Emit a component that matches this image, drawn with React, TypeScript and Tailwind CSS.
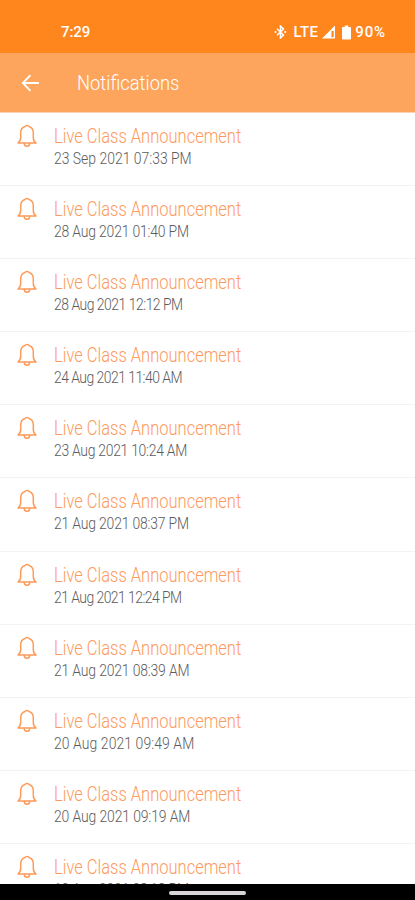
type Notification = {
  title: string;
  date: string;
  tracking: string;
};

const notifications: Notification[] = [
  { title: "Live Class Announcement", date: "23 Sep 2021 07:33 PM", tracking: "tracking-[0px]" },
  { title: "Live Class Announcement", date: "28 Aug 2021 01:40 PM", tracking: "tracking-[-0.22px]" },
  { title: "Live Class Announcement", date: "28 Aug 2021 12:12 PM", tracking: "tracking-[-0.6px]" },
  { title: "Live Class Announcement", date: "24 Aug 2021 11:40 AM", tracking: "tracking-[-0.65px]" },
  { title: "Live Class Announcement", date: "23 Aug 2021 10:24 AM", tracking: "tracking-[-0.35px]" },
  { title: "Live Class Announcement", date: "21 Aug 2021 08:37 PM", tracking: "tracking-[-0.22px]" },
  { title: "Live Class Announcement", date: "21 Aug 2021 12:24 PM", tracking: "tracking-[-0.67px]" },
  { title: "Live Class Announcement", date: "21 Aug 2021 08:39 AM", tracking: "tracking-[-0.2px]" },
  { title: "Live Class Announcement", date: "20 Aug 2021 09:49 AM", tracking: "tracking-[0.1px]" },
  { title: "Live Class Announcement", date: "20 Aug 2021 09:19 AM", tracking: "tracking-[-0.15px]" },
  { title: "Live Class Announcement", date: "19 Aug 2021 08:18 PM", tracking: "tracking-[-0.22px]" },
];

const BellIcon = () => (
  <svg width="20" height="24" viewBox="0 0 20 24" fill="none" stroke="#fd9b58" strokeWidth="1.5" strokeLinecap="round" strokeLinejoin="round">
    <path d="M8 2.5C8.2 1.1 11.8 1.1 12 2.5C15 3.4 16.3 5.6 16.3 8.8V13.5C16.3 15.8 17 17.6 19 19H1C3 17.6 3.7 15.8 3.7 13.5V8.8C3.7 5.6 5 3.4 8 2.5Z" />
    <path d="M7.2 19.2C7.4 23.4 12.6 23.4 12.8 19.2" />
  </svg>
);

const StatusBar = () => (
  <div className="h-[53px] shrink-0 bg-[#ff851d] text-white flex items-start pt-[22px] pl-[61px] pr-[29px]">
    <span className="text-[15px] leading-[20px] font-medium tracking-[-0.1px]">7:29</span>
    <div className="ml-auto flex items-center h-5">
      <svg width="13" height="14" viewBox="0 0 13 14" fill="none" stroke="white" strokeWidth="1.5">
        <path d="M3 3.8L9.5 10L6.5 12.8V1.2L9.5 4L3 10.2" />
        <circle cx="1.5" cy="7" r="1.1" fill="white" stroke="none" />
        <circle cx="11.2" cy="7" r="1.1" fill="white" stroke="none" />
      </svg>
      <span className="ml-[6px] text-[15px] leading-[20px] font-medium tracking-[0.3px]">LTE</span>
      <svg className="ml-[4px]" width="14" height="14" viewBox="0 0 14 14">
        <path d="M0 13.5L13 .5V13.5Z" fill="white" />
        <path d="M9.5 6H11.7V12.2H9.5Z" fill="#ff851d" />
      </svg>
      <svg className="ml-[6px]" width="9" height="15" viewBox="0 0 9 15" fill="white">
        <path d="M2.7 .5H6.3V2H8C8.6 2 9 2.4 9 3V13.5C9 14.1 8.6 14.5 8 14.5H1C.4 14.5 0 14.1 0 13.5V3C0 2.4 .4 2 1 2H2.7Z" />
      </svg>
      <span className="ml-[4px] text-[15px] leading-[20px] font-medium tracking-[0.9px]">90%</span>
    </div>
  </div>
);

const Header = () => (
  <header className="h-[60px] shrink-0 bg-[#fda55c] border-b border-[#fdd0b0] flex items-center pl-[21px] text-white">
    <svg width="19" height="18" viewBox="0 0 19 18" fill="none" stroke="white" strokeWidth="1.9">
      <path d="M9.5 1.2L1.8 9L9.5 16.8M1.8 9H18" />
    </svg>
    <h1 className="ml-[37px] pt-[1px] text-[21px] leading-[28px] font-light origin-left scale-x-[0.875]">Notifications</h1>
  </header>
);

const NotificationRow = ({ title, date, tracking }: Notification) => (
  <li className="h-[73.1px] shrink-0 border-b border-[#f3f3f3] flex items-start pl-[17px]">
    <div className="pt-[11px]">
      <BellIcon />
    </div>
    <div className="ml-[16.5px] pt-[11px] whitespace-nowrap">
      <p className="w-max origin-left scale-x-[0.825] text-[20px] leading-[24px] font-light text-[#fd9a5d]">{title}</p>
      <p className={`w-max origin-left scale-x-[0.82] text-[17px] leading-[21px] font-light text-[#5c5c5c] ${tracking}`}>{date}</p>
    </div>
  </li>
);

const App = () => {
  return (
    <div className="h-[900px] w-full flex flex-col overflow-hidden bg-white font-['Roboto','Liberation_Sans',sans-serif]">
      <StatusBar />
      <Header />
      <ul className="flex-1 min-h-0 overflow-hidden flex flex-col">
        {notifications.map((item) => (
          <NotificationRow key={item.date} {...item} />
        ))}
      </ul>
      <div className="h-[16px] shrink-0 bg-black flex justify-center pt-[7px]">
        <div className="h-[4px] w-[77px] rounded-full bg-[#d8d4d8]" />
      </div>
    </div>
  );
};

export default App;
